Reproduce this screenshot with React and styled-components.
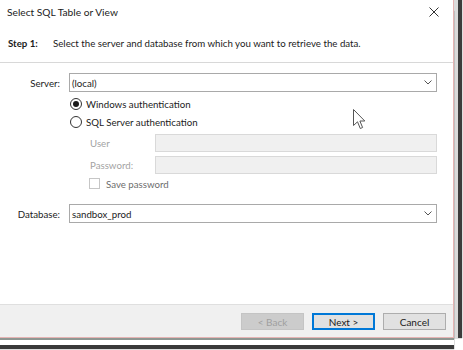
import React from "react";
import styled, { createGlobalStyle } from "styled-components";

const GlobalStyle = createGlobalStyle`
  html, body {
    margin: 0;
    padding: 0;
    background: #ffffff;
  }
  body {
    font-family: Lato, "Noto Sans", sans-serif;
    font-size: 9.7px;
    color: #1b1b1b;
  }
`;

const Page = styled.div`
  position: relative;
  width: 463px;
  height: 350px;
  overflow: hidden;
  background: #ffffff;
`;

const Window = styled.div`
  display: flex;
  flex-direction: column;
  width: 453px;
  height: 337px;
  background: #ffffff;
  border-right: 1px solid #e5b3b3;
  border-bottom: 1px solid #e5b3b3;
  box-shadow: 0 2px 0 #8e9792, 0 7px 0 #ffffff, 0 11px 1px #3a3a3a,
    4px 0 0 #dadada, 8px 0 1px #3c3c3c;
`;

const TitleBar = styled.div`
  display: flex;
  align-items: center;
  justify-content: space-between;
  height: 23px;
  padding: 0 14px 0 7px;
  font-size: 10.2px;
  color: #1b1b1b;
`;

const CloseIcon = styled.svg`
  width: 10px;
  height: 10px;
  display: block;
`;

const StepLine = styled.div`
  display: flex;
  align-items: center;
  height: 39px;
  padding-left: 8px;
  border-bottom: 1px solid #d8d8d8;
`;

const StepLabel = styled.span`
  font-weight: bold;
  width: 45px;
`;

const Body = styled.div`
  flex: 1;
  display: flex;
  flex-direction: column;
  padding: 10px 16px 0 0;
`;

const FieldRow = styled.div`
  display: grid;
  grid-template-columns: ${(p) => p.$labelWidth || 60}px 1fr;
  column-gap: ${(p) => p.$gap || 9}px;
  align-items: center;
  margin-top: ${(p) => p.$top || 0}px;
  padding-left: ${(p) => p.$indent || 0}px;
`;

const Label = styled.label`
  text-align: ${(p) => p.$align || "right"};
  color: ${(p) => (p.$disabled ? "#a3a3a3" : "#1b1b1b")};
`;

const Combo = styled.div`
  display: flex;
  align-items: center;
  justify-content: space-between;
  height: 17px;
  padding: 0 4px 0 2px;
  border: 1px solid #a9a9a9;
  background: #ffffff;
`;

const TextBox = styled.div`
  height: 16px;
  border: 1px solid #d9d9d9;
  background: #f0f0f0;
`;

const Options = styled.div`
  display: flex;
  flex-direction: column;
  padding-left: 70px;
  margin-top: 5px;
  gap: 5px;
`;

const OptionRow = styled.div`
  display: flex;
  align-items: center;
  gap: 4px;
  height: 13px;
`;

const Radio = styled.span`
  position: relative;
  width: 10px;
  height: 10px;
  border: 1px solid #333333;
  border-radius: 50%;
  background: #ffffff;
  &::after {
    content: "";
    display: ${(p) => (p.$checked ? "block" : "none")};
    position: absolute;
    left: 2px;
    top: 2px;
    width: 6px;
    height: 6px;
    border-radius: 50%;
    background: #1b1b1b;
  }
`;

const CheckBox = styled.span`
  width: 9px;
  height: 9px;
  border: 1px solid #c6c6c6;
  background: #ffffff;
`;

const SaveRow = styled.div`
  display: flex;
  align-items: center;
  gap: 6px;
  height: 13px;
  padding-left: 89px;
  margin-top: 3px;
  color: #6d6d6d;
`;

const Footer = styled.div`
  display: flex;
  justify-content: flex-end;
  gap: 7px;
  height: 33px;
  padding: 8px 7px 0 0;
  box-sizing: border-box;
  background: #f0f0f0;
  border-top: 1px solid #dfdfdf;
`;

const Button = styled.button`
  width: 63px;
  height: 17px;
  padding: 0;
  font-family: inherit;
  font-size: 10px;
  border: 1px solid ${(p) => (p.$primary ? "#0078d7" : p.disabled ? "#c4c4c4" : "#adadad")};
  background: ${(p) => (p.disabled ? "#cccccc" : "#e1e1e1")};
  color: ${(p) => (p.disabled ? "#9f9f9f" : "#1b1b1b")};
  box-shadow: ${(p) => (p.$primary ? "inset 0 0 0 1px #0078d7" : "none")};
  & + & {
    margin-left: ${(p) => (p.$wide ? 1 : 0)}px;
  }
`;

const Cursor = styled.svg`
  position: absolute;
  left: 353px;
  top: 109px;
  width: 13px;
  height: 21px;
`;

const Chevron = () => (
  <svg width="8" height="5" viewBox="0 0 8 5">
    <path d="M0.5 0.5 L4 4 L7.5 0.5" fill="none" stroke="#555" strokeWidth="1" />
  </svg>
);

export default function App() {
  return (
    <Page>
      <GlobalStyle />
      <Window>
        <TitleBar>
          <span>Select SQL Table or View</span>
          <CloseIcon viewBox="0 0 10 10">
            <path d="M0.5 0.5 L9.5 9.5 M9.5 0.5 L0.5 9.5" stroke="#333" strokeWidth="1" />
          </CloseIcon>
        </TitleBar>
        <StepLine>
          <StepLabel>Step 1:</StepLabel>
          <span>Select the server and database from which you want to retrieve the data.</span>
        </StepLine>
        <Body>
          <FieldRow>
            <Label>Server:</Label>
            <Combo>
              <span>(local)</span>
              <Chevron />
            </Combo>
          </FieldRow>
          <Options>
            <OptionRow>
              <Radio $checked />
              <span>Windows authentication</span>
            </OptionRow>
            <OptionRow>
              <Radio />
              <span>SQL Server authentication</span>
            </OptionRow>
          </Options>
          <FieldRow $labelWidth={56} $gap={0} $indent={90} $top={6}>
            <Label $align="left" $disabled>User</Label>
            <TextBox />
          </FieldRow>
          <FieldRow $labelWidth={56} $gap={0} $indent={90} $top={4}>
            <Label $align="left" $disabled>Password:</Label>
            <TextBox />
          </FieldRow>
          <SaveRow>
            <CheckBox />
            <span>Save password</span>
          </SaveRow>
          <FieldRow $top={14}>
            <Label>Database:</Label>
            <Combo>
              <span>sandbox_prod</span>
              <Chevron />
            </Combo>
          </FieldRow>
        </Body>
        <Footer>
          <Button disabled>&lt; Back</Button>
          <Button $primary>Next &gt;</Button>
          <Button $wide>Cancel</Button>
        </Footer>
      </Window>
      <Cursor viewBox="0 0 13 21">
        <path
          d="M0.5 0.5 L0.5 16.5 L4.5 12.8 L7.3 19.5 L9.6 18.5 L6.9 12 L11.8 12 Z"
          fill="#ffffff"
          stroke="#555"
          strokeWidth="1"
          strokeLinejoin="round"
        />
      </Cursor>
    </Page>
  );
}
